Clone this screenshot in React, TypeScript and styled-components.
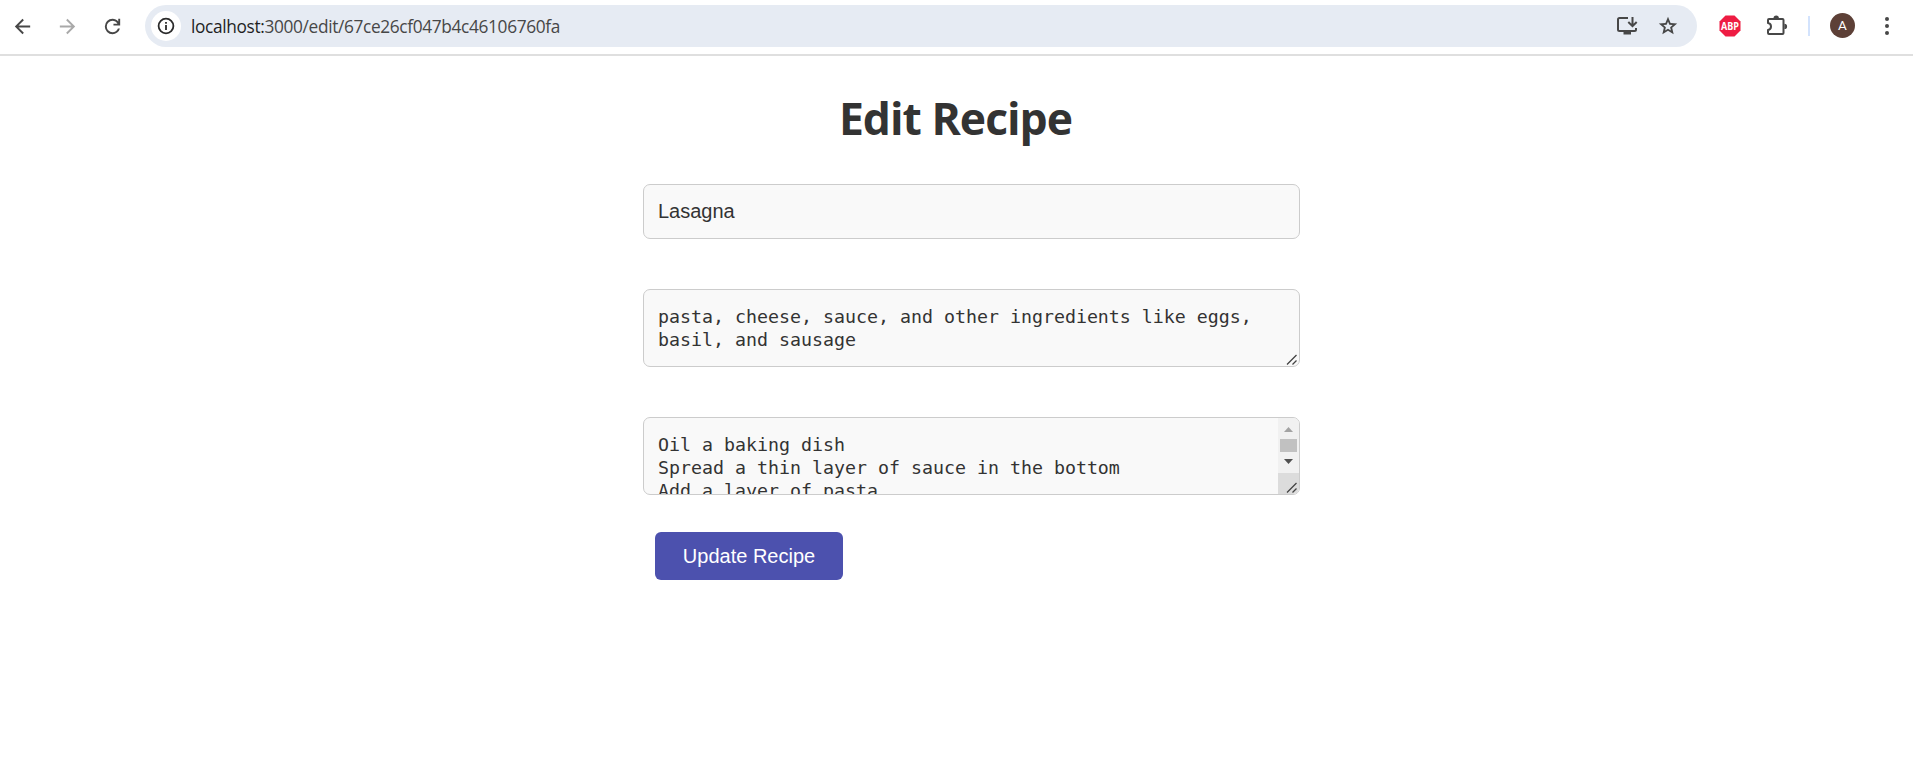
import React from 'react';
import styled, { createGlobalStyle } from 'styled-components';

const GlobalStyle = createGlobalStyle`
  *, *::before, *::after { box-sizing: border-box; }
  body {
    margin: 0;
    background: #fff;
    overflow: hidden;
    font-family: 'Open Sans', 'Noto Sans', sans-serif;
  }
`;

const Toolbar = styled.header`
  display: flex;
  align-items: flex-start;
  height: 56px;
  padding: 5px 0 0 10px;
  border-bottom: 2px solid #dfdfdf;
`;

const IconSlot = styled.span<{ $width: number; $gap?: number }>`
  display: flex;
  align-items: center;
  justify-content: center;
  flex: none;
  width: ${(p) => p.$width}px;
  height: 42px;
  margin-left: ${(p) => p.$gap ?? 0}px;
  svg { display: block; }
`;

const AddressBar = styled.div`
  display: flex;
  align-items: center;
  width: 1552px;
  height: 42px;
  margin-left: 20px;
  padding: 0 18px 0 6px;
  border-radius: 21px;
  background: #e6ebf3;
`;

const SiteInfo = styled.span`
  display: flex;
  align-items: center;
  justify-content: center;
  width: 30px;
  height: 30px;
  border-radius: 50%;
  background: #fff;
`;

const Url = styled.span`
  flex: 1;
  margin-left: 10px;
  padding-top: 2px;
  font-size: 17.3px;
  line-height: 24px;
  letter-spacing: -0.35px;
  color: #474747;
  white-space: nowrap;
`;

const Host = styled.span`
  color: #1f1f1f;
`;

const Divider = styled.span`
  width: 2px;
  height: 20px;
  margin: 11px 0 0 20px;
  background: #d3e3fd;
`;

const Avatar = styled.span`
  display: flex;
  align-items: center;
  justify-content: center;
  width: 25px;
  height: 25px;
  margin: 8px 0 0 20px;
  border-radius: 50%;
  background: #5d4037;
  color: #fff;
  font: 400 13.5px/25px Roboto, sans-serif;
`;

const Page = styled.main`
  display: flex;
  flex-direction: column;
  width: 657px;
  margin-left: 643px;
`;

const Title = styled.h1`
  align-self: center;
  margin: 32px 32px 0 0;
  font-size: 44.5px;
  font-weight: 700;
  line-height: 60px;
  letter-spacing: -1px;
  color: #333;
  white-space: nowrap;
`;

const Field = styled.div<{ $gap: number }>`
  display: flex;
  position: relative;
  margin-top: ${(p) => p.$gap}px;
  border: 1px solid #ccc;
  border-radius: 7px;
  background: #f9f9f9;
  color: #333;
  overflow: hidden;
`;

const TextInput = styled(Field)`
  height: 55px;
  padding: 0 14px 2px;
  align-items: center;
  font: 20px/24px 'Liberation Sans', Arial, sans-serif;
`;

const TextArea = styled(Field)`
  height: 78px;
  padding-left: 14px;
`;

const AreaText = styled.div`
  flex: 1;
  padding-top: 15px;
  font: 18.27px/23.2px 'DejaVu Sans Mono', Consolas, monospace;
  white-space: pre;
`;

const ResizeGrip = styled.svg`
  position: absolute;
  right: 1px;
  bottom: 0;
`;

const Scrollbar = styled.div`
  display: flex;
  flex-direction: column;
  align-items: center;
  width: 21px;
  background: #f1f1f1;
`;

const Arrow = styled.svg<{ $top: number }>`
  display: block;
  flex: none;
  margin-top: ${(p) => p.$top}px;
`;

const Thumb = styled.div`
  flex: none;
  width: 17px;
  height: 13px;
  margin-top: 7px;
  background: #c1c1c1;
`;

const Corner = styled.div`
  width: 21px;
  height: 21px;
  margin-top: auto;
  background: #dcdcdc;
`;

const SubmitButton = styled.button`
  width: 188px;
  height: 48px;
  margin: 37px 0 0 12px;
  padding: 0;
  border: 0;
  border-radius: 6px;
  background: #4c51ae;
  color: #fff;
  font: 20px/24px 'Liberation Sans', Arial, sans-serif;
`;

const Grip = () => (
  <ResizeGrip width="12" height="12" viewBox="0 0 12 12" fill="none" stroke="#444" strokeWidth="1.3">
    <path d="M1 10.5 10.5 1M6.5 10.5l4-4" />
  </ResizeGrip>
);

export default function App() {
  return (
    <>
      <GlobalStyle />
      <Toolbar>
        <IconSlot $width={25}>
          <svg width="23" height="23" viewBox="0 0 24 24" fill="#474747">
            <path d="m7.825 13 5.6 5.6L12 20l-8-8 8-8 1.425 1.4-5.6 5.6H20v2z" />
          </svg>
        </IconSlot>
        <IconSlot $width={25} $gap={20}>
          <svg width="23" height="23" viewBox="0 0 24 24" fill="#a9a9a9">
            <path d="M16.175 13H4v-2h12.175l-5.6-5.6L12 4l8 8-8 8-1.425-1.4z" />
          </svg>
        </IconSlot>
        <IconSlot $width={25} $gap={20}>
          <svg width="23" height="23" viewBox="0 0 24 24" fill="#474747">
            <path d="M12 20q-3.35 0-5.675-2.325T4 12t2.325-5.675T12 4q1.725 0 3.3.712T18 6.75V4h2v7h-7V9h4.2q-.8-1.4-2.187-2.2T12 6Q9.5 6 7.750 7.750T6 12t1.750 4.250T12 18q1.925 0 3.475-1.1T17.650 14h2.100q-.7 2.650-2.850 4.325T12 20" />
          </svg>
        </IconSlot>
        <AddressBar>
          <SiteInfo>
            <svg width="18" height="18" viewBox="0 0 18 18">
              <circle cx="9" cy="9" r="7.4" fill="none" stroke="#2b2b2b" strokeWidth="1.8" />
              <path d="M8.100 8h1.800v5H8.100zM8.100 5h1.800v1.800H8.100z" fill="#2b2b2b" />
            </svg>
          </SiteInfo>
          <Url>
            <Host>localhost:</Host>3000/edit/67ce26cf047b4c46106760fa
          </Url>
          <IconSlot $width={22}>
            <svg width="22" height="18" viewBox="0 0 22 18" fill="none" stroke="#474747" strokeWidth="2">
              <path d="M11 1H2.500Q1 1 1 2.500V12.500Q1 14 2.500 14H17.500Q19 14 19 12.500V11" />
              <path d="M15.500 0v8.500M11.300 5 15.500 9.200 19.700 5" />
              <path d="M6.500 14h7.500v3.500H6.500z" fill="#474747" stroke="none" />
            </svg>
          </IconSlot>
          <IconSlot $width={22} $gap={18}>
            <svg width="22" height="22" viewBox="0 0 24 24" fill="#474747">
              <path d="m8.850 16.825 3.150-1.900 3.150 1.925-.825-3.600 2.775-2.400-3.650-.325-1.450-3.400-1.450 3.375-3.650.325 2.775 2.425zM5.825 21l1.625-7.025L2 9.250l7.200-.625L12 2l2.800 6.625 7.200.625-5.450 4.725L18.175 21 12 17.275z" />
            </svg>
          </IconSlot>
        </AddressBar>
        <IconSlot $width={22} $gap={22}>
          <svg width="22" height="22" viewBox="0 0 22 22">
            <path d="M6.500.5h9l6 6v9l-6 6h-9l-6-6v-9z" fill="#ee1c43" />
            <text x="11" y="14.700" textAnchor="middle" textLength="18" lengthAdjust="spacingAndGlyphs" fill="#fff" fontFamily="Open Sans, sans-serif" fontSize="10" fontWeight="700">ABP</text>
          </svg>
        </IconSlot>
        <IconSlot $width={22} $gap={25}>
          <svg width="22" height="22" viewBox="0 0 22 22">
            <path d="M2 8V5Q2 4 3 4H16.500Q17.500 4 17.500 5V18Q17.500 19 16.500 19H3Q2 19 2 18V15Q5 14.500 5 11.500T2 8Z" fill="none" stroke="#474747" strokeWidth="2" strokeLinejoin="round" />
            <path d="M7.500 3.200a2.700 2.700 0 0 1 5.400 0zM18.400 8.700a2.700 2.700 0 0 1 0 5.400z" fill="#474747" />
          </svg>
        </IconSlot>
        <Divider />
        <Avatar>A</Avatar>
        <IconSlot $width={6} $gap={29}>
          <svg width="6" height="20" viewBox="0 0 6 20" fill="#474747">
            <circle cx="3" cy="3" r="2" />
            <circle cx="3" cy="10" r="2" />
            <circle cx="3" cy="17" r="2" />
          </svg>
        </IconSlot>
      </Toolbar>
      <Page>
        <Title>Edit Recipe</Title>
        <TextInput $gap={36}>Lasagna</TextInput>
        <TextArea $gap={50}>
          <AreaText>{'pasta, cheese, sauce, and other ingredients like eggs,\nbasil, and sausage'}</AreaText>
          <Grip />
        </TextArea>
        <TextArea $gap={50}>
          <AreaText>{'Oil a baking dish\nSpread a thin layer of sauce in the bottom\nAdd a layer of pasta'}</AreaText>
          <Scrollbar>
            <Arrow $top={9} width="9" height="5" viewBox="0 0 9 5" fill="#a3a3a3"><path d="M0 5 4.500 0 9 5z" /></Arrow>
            <Thumb />
            <Arrow $top={7} width="9" height="5" viewBox="0 0 9 5" fill="#505050"><path d="M0 0h9L4.500 5z" /></Arrow>
            <Corner />
          </Scrollbar>
          <Grip />
        </TextArea>
        <SubmitButton>Update Recipe</SubmitButton>
      </Page>
    </>
  );
}
